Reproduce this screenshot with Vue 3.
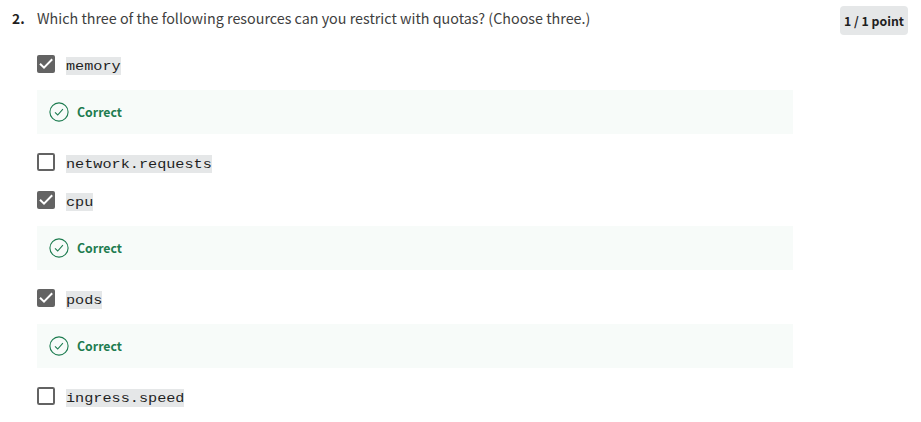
<script setup>
const options = [
  { label: 'memory', checked: true },
  { label: 'network.requests', checked: false },
  { label: 'cpu', checked: true },
  { label: 'pods', checked: true },
  { label: 'ingress.speed', checked: false },
]
</script>

<template>
  <main class="question">
    <div class="number">2.</div>
    <div class="content">
      <div class="prompt"><span>Which three of the following resources can you restrict with quotas? (Choose three.)</span></div>
      <div v-for="o in options" :key="o.label" class="option">
        <div class="choice">
          <svg class="box" viewBox="0 0 18 18">
            <template v-if="o.checked">
              <rect width="18" height="18" rx="2" fill="#636363" />
              <path d="M3 8.7 7 12.7 15.2 4.3" fill="none" stroke="#fff" stroke-width="2" />
            </template>
            <rect v-else x="1" y="1" width="16" height="16" rx="1.2" fill="#fff" stroke="#636363" stroke-width="2" />
          </svg>
          <code><span>{{ o.label }}</span></code>
        </div>
        <div v-if="o.checked" class="feedback">
          <svg class="tick" viewBox="0 0 20 20">
            <circle cx="10" cy="10" r="9.1" />
            <path d="m6 10.4 2.7 2.6 5.2-5.8" />
          </svg>
          <span>Correct</span>
        </div>
      </div>
    </div>
    <div class="points"><span>1 / 1 point</span></div>
  </main>
</template>

<style>
body {
  background: #fff;
}
</style>

<style scoped>
.question {
  box-sizing: border-box;
  display: flex;
  align-items: flex-start;
  width: 921px;
  height: 422px;
  padding: 6px 13px 0 12px;
  overflow: hidden;
  color: #1f1f1f;
  font-family: "Noto Sans CJK JP", "Noto Sans", sans-serif;
}
.number {
  width: 25px;
  font-size: 13.8px;
  font-weight: 700;
  line-height: 25px;
}
.content {
  width: 756px;
}
.prompt {
  height: 49px;
  color: #404040;
  font-size: 14.32px;
  line-height: 23px;
  white-space: nowrap;
}
.option {
  margin-bottom: 20px;
}
.option:has(.feedback) {
  margin-bottom: 19px;
}
.choice {
  display: flex;
  height: 18px;
}
.box {
  width: 18px;
  height: 18px;
  margin-right: 11px;
}
code {
  height: 18px;
  margin-top: 2px;
  background: #e5e7e8;
  font-family: "Liberation Mono", monospace;
  font-size: 15.2px;
  line-height: 18px;
}
code span {
  display: block;
  transform: scaleY(0.82);
  transform-origin: 50% 14px;
}
.feedback {
  box-sizing: border-box;
  display: flex;
  align-items: center;
  height: 44px;
  margin-top: 17px;
  padding-left: 12px;
  background: #f7fbf9;
  color: #1d7c50;
  font-size: 12.3px;
  font-weight: 700;
  line-height: 20px;
}
.tick {
  width: 20px;
  height: 20px;
  margin-right: 8px;
  fill: none;
  stroke: #1d7c50;
  stroke-width: 1.1;
}
.points {
  width: 68px;
  height: 29px;
  margin-left: auto;
  border-radius: 4px;
  background: #e5e7e8;
  font-size: 12.3px;
  font-weight: 700;
  line-height: 31px;
  text-align: center;
  white-space: nowrap;
}
</style>
